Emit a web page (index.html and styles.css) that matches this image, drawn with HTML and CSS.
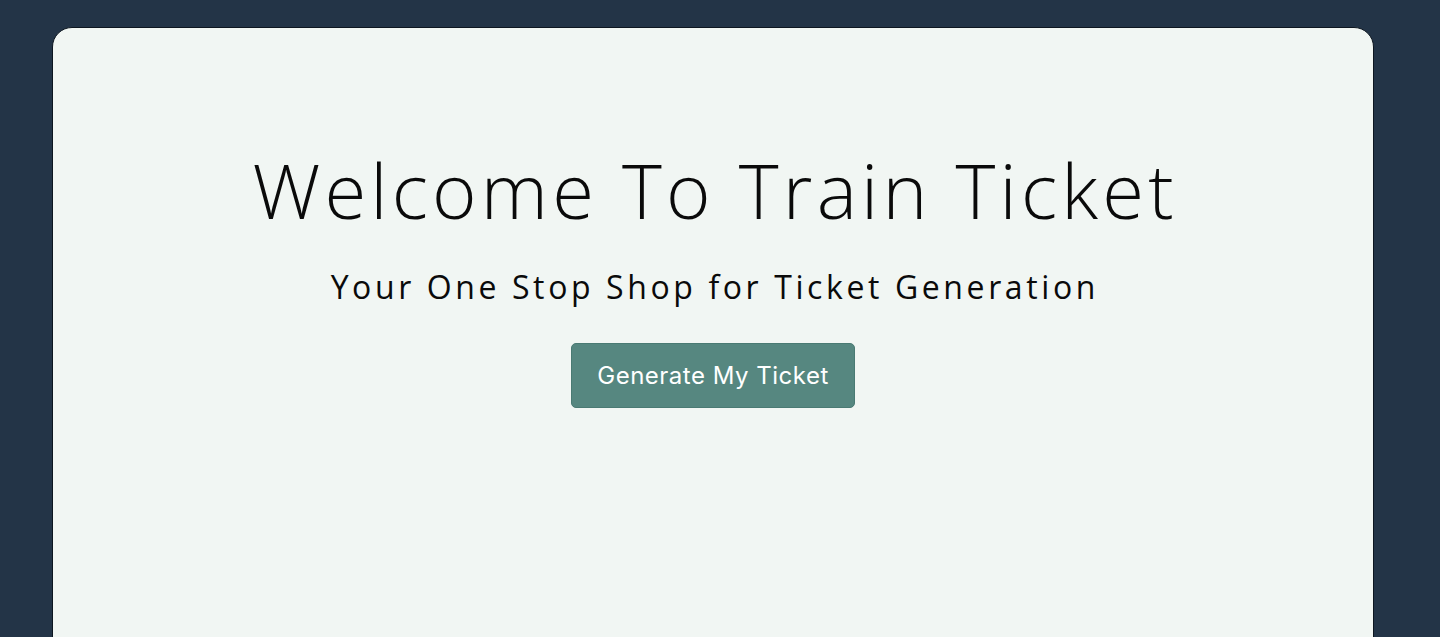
FILE: index.html
```html
<!DOCTYPE html>
<html lang="en">
<head>
<meta charset="utf-8">
<title>Train Ticket</title>
<link rel="stylesheet" href="styles.css">
</head>
<body>
<main class="card">
  <h1 class="title">Welcome To Train Ticket</h1>
  <p class="subtitle">Your One Stop Shop for Ticket Generation</p>
  <button class="btn" type="button">Generate My Ticket</button>
</main>
</body>
</html>
```
FILE: styles.css
```css
html, body {
  margin: 0;
  padding: 0;
  height: 100%;
}
body {
  background: #233447;
  padding: 27px 66px 0 52px;
  box-sizing: border-box;
  overflow: hidden;
}
.card {
  background: #f1f6f3;
  border: 1px solid #0d1620;
  border-radius: 20px;
  height: 660px;
  display: flex;
  flex-direction: column;
  align-items: center;
  padding-top: 124px;
  box-sizing: border-box;
}
.title {
  font-family: "Open Sans", sans-serif;
  font-weight: 350;
  font-size: 76px;
  line-height: 1;
  margin: 0;
  color: #0a0a0a;
  letter-spacing: 4.2px;
  text-indent: 4.2px;
}
.subtitle {
  font-family: "Open Sans", sans-serif;
  font-weight: 400;
  font-size: 32px;
  line-height: 1;
  margin: 43px 0 0;
  color: #0a0a0a;
  letter-spacing: 3.6px;
  text-indent: 3.6px;
}
.btn {
  margin-top: 40px;
  background: #568780;
  color: #ffffff;
  border: 1px solid #4a7a73;
  border-radius: 5px;
  font-family: Inter, "Liberation Sans", sans-serif;
  font-size: 24px;
  letter-spacing: 0.5px;
  padding: 0 25px;
  height: 65px;
  cursor: pointer;
}
```
